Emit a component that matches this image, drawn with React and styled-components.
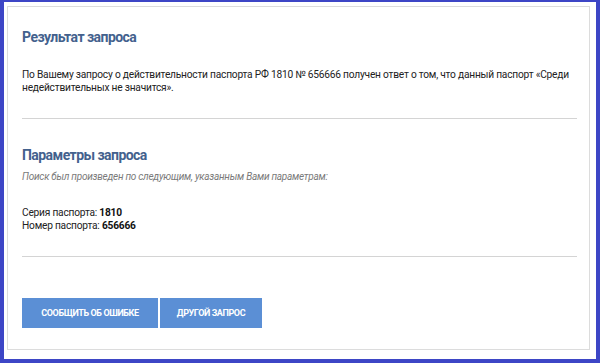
import React from 'react'
import styled, { createGlobalStyle } from 'styled-components'

const GlobalStyle = createGlobalStyle`
  html, body {
    margin: 0;
    padding: 0;
    background: #ffffff;
  }
  * {
    box-sizing: border-box;
  }
`

const Frame = styled.div`
  width: 600px;
  height: 363px;
  border-style: solid;
  border-color: #3d46c6;
  border-width: 2px 4px 4px 4px;
  background: #ffffff;
  padding: 4px 6px 9px 3px;
  font-family: Roboto, 'Noto Sans', sans-serif;
`

const Panel = styled.div`
  height: 100%;
  border: 1px solid #dcdcdc;
  padding: 21px 12px 0 14px;
  display: flex;
  flex-direction: column;
`

const Title = styled.h2`
  margin: 0;
  font-size: 14px;
  line-height: 18px;
  font-weight: 700;
  color: #43618d;
  letter-spacing: -0.55px;
`

const Paragraph = styled.p`
  margin: ${(p) => p.$mt || 0}px 0 0;
  font-size: ${(p) => (p.$italic ? 10 : 10.2)}px;
  line-height: 13px;
  letter-spacing: ${(p) => (p.$italic ? -0.25 : -0.22)}px;
  font-style: ${(p) => (p.$italic ? 'italic' : 'normal')};
  color: ${(p) => (p.$italic ? '#7a7a7a' : '#222')};
  white-space: ${(p) => (p.$nowrap ? 'nowrap' : 'normal')};

  b {
    color: #111;
  }
`

const Divider = styled.hr`
  margin: ${(p) => p.$mt}px 0 ${(p) => p.$mb}px;
  border: 0;
  border-top: 1px solid #d4d4d4;
`

const Buttons = styled.div`
  display: flex;
  gap: 2px;
  margin-top: 41px;
`

const Button = styled.button`
  width: ${(p) => p.$w}px;
  height: 30px;
  border: 0;
  background: #5b8fd5;
  color: #fff;
  font-family: Roboto, 'Noto Sans', sans-serif;
  font-weight: 700;
  font-size: 9px;
  letter-spacing: -0.4px;
  text-transform: uppercase;
  padding: 0;
`

export default function App() {
  return (
    <>
      <GlobalStyle />
      <Frame>
        <Panel>
          <Title>Результат запроса</Title>
          <Paragraph $mt={22} $nowrap>
            По Вашему запросу о действительности паспорта РФ 1810 № 656666 получен ответ о том, что данный паспорт «Среди
            <br />
            недействительных не значится».
          </Paragraph>
          <Divider $mt={24} $mb={27} />
          <Title>Параметры запроса</Title>
          <Paragraph $italic $mt={6}>
            Поиск был произведен по следующим, указанным Вами параметрам:
          </Paragraph>
          <Paragraph $mt={23}>
            Серия паспорта: <b>1810</b>
            <br />
            Номер паспорта: <b>656666</b>
          </Paragraph>
          <Divider $mt={24} $mb={0} />
          <Buttons>
            <Button $w={136}>Сообщить об ошибке</Button>
            <Button $w={102}>Другой запрос</Button>
          </Buttons>
        </Panel>
      </Frame>
    </>
  )
}
